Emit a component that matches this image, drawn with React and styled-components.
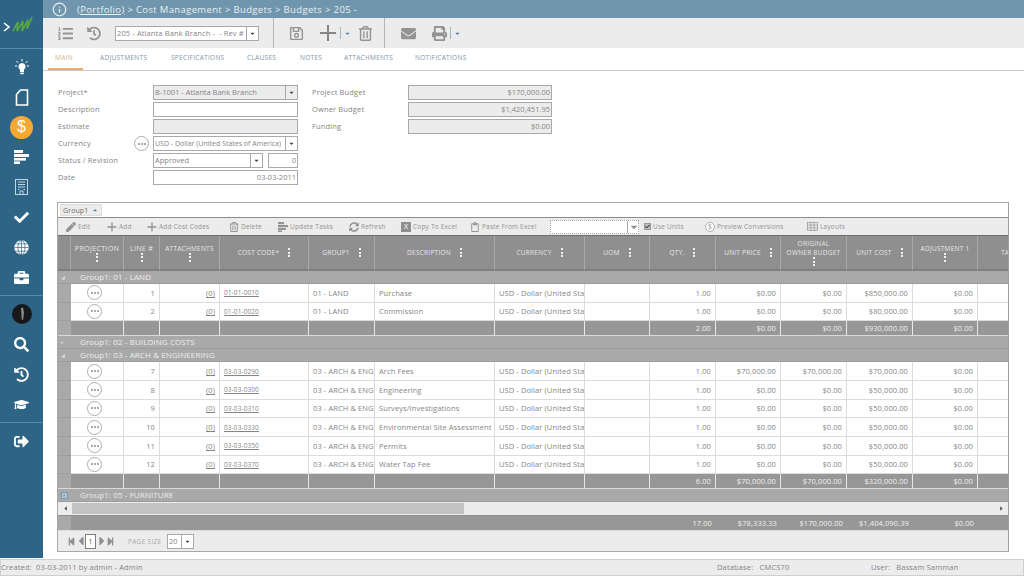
import React from "react";
import styled, { createGlobalStyle } from "styled-components";
import {
  FaListOl,
  FaHistory,
  FaRegSave,
  FaRegTrashAlt,
  FaEnvelope,
  FaPrint,
  FaCheck,
  FaBriefcase,
  FaSearch,
  FaGraduationCap,
  FaSignOutAlt,
  FaPen,
  FaSyncAlt,
  FaRegClipboard,
  FaStepBackward,
  FaStepForward,
  FaCaretLeft,
  FaCaretRight,
  FaCaretDown,
  FaCaretUp,
} from "react-icons/fa";
import { FiInfo } from "react-icons/fi";

const FONT = '"Open Sans", "Liberation Sans", sans-serif';

const GlobalStyle = createGlobalStyle`
  html, body {
    margin: 0;
    padding: 0;
    background: #fff;
    overflow: hidden;
  }
  * {
    box-sizing: border-box;
  }
`;

const Page = styled.div`
  width: 1024px;
  height: 576px;
  display: flex;
  flex-direction: column;
  font-family: ${FONT};
  color: #858585;
  font-size: 7.5px;
  letter-spacing: 0.1px;
`;

const Body = styled.div`
  display: flex;
  height: 558px;
`;

const Sidebar = styled.nav`
  width: 43px;
  flex: none;
  background: #2e6485;
  display: flex;
  flex-direction: column;
`;

const LogoBox = styled.div`
  height: 49px;
  padding: 15px 0 0 3px;
  border-bottom: 1px solid #5c89a4;
`;

const NavGroup = styled.div`
  display: flex;
  flex-direction: column;
  padding: 3px 0 3px;
  border-bottom: ${(p) => (p.$last ? "none" : "1px solid #5c89a4")};
`;

const NavItem = styled.div`
  height: 30px;
  display: flex;
  align-items: center;
  justify-content: center;
  color: #fff;
  font-size: 15px;
`;

const Coin = styled.div`
  width: 23px;
  height: 23px;
  border-radius: 50%;
  background: #f5a834;
  color: #fff;
  display: flex;
  align-items: center;
  justify-content: center;
  font-size: 16px;
  font-family: "Liberation Sans", sans-serif;
`;

const Main = styled.main`
  flex: 1;
  min-width: 0;
  display: flex;
  flex-direction: column;
`;

const TitleBar = styled.header`
  height: 18px;
  background: #7096ad;
  color: #e9eff3;
  display: flex;
  align-items: center;
  gap: 10px;
  padding-left: 9px;
  font-size: 9.5px;
  letter-spacing: 0.35px;
  svg {
    font-size: 15px;
  }
  u {
    text-underline-offset: 1px;
  }
`;

const TopToolbar = styled.div`
  height: 30px;
  background: #ececec;
  display: flex;
  align-items: center;
  color: #939393;
  font-size: 15px;
`;

const IconSlot = styled.div`
  width: ${(p) => p.$w}px;
  flex: none;
  display: flex;
  align-items: center;
  justify-content: center;
  gap: ${(p) => p.$gap || 0}px;
`;

const ToolDivider = styled.div`
  width: 1px;
  height: 30px;
  background: #b4b4b4;
  flex: none;
`;

const MiniCaret = styled(FaCaretDown)`
  font-size: 7px;
  color: #4f7b96;
`;

const ThinBar = styled.span`
  width: 1px;
  height: 12px;
  background: #9fb6c5;
`;

const Tabs = styled.div`
  height: 23px;
  display: flex;
  gap: 23px;
  padding: 6px 0 0 12px;
  border-bottom: 1px solid #c9c9c9;
`;

const Tab = styled.div`
  position: relative;
  height: 16px;
  line-height: 8px;
  width: ${(p) => p.$w}px;
  white-space: nowrap;
  font-size: 6.5px;
  letter-spacing: 0.3px;
  color: ${(p) => (p.$active ? "#d8b28e" : "#7f97a8")};
  ${(p) =>
    p.$active &&
    `&::after {
      content: "";
      position: absolute;
      left: -7px;
      right: -6px;
      bottom: 0;
      height: 2px;
      background: #e8b06c;
    }`}
`;

const Form = styled.section`
  display: flex;
  gap: 14px;
  padding: 14px 0 0 15px;
  height: 131px;
`;

const FormColumn = styled.div`
  width: 240px;
  display: flex;
  flex-direction: column;
  gap: 2px;
`;

const FormRow = styled.div`
  height: 15px;
  display: grid;
  grid-template-columns: ${(p) => p.$label}px 1fr;
  align-items: center;
  font-size: 7.5px;
  letter-spacing: 0.15px;
`;

const Label = styled.span`
  margin-top: -1px;
`;

const LabelCell = styled.div`
  display: flex;
  align-items: center;
  justify-content: space-between;
  padding-right: 4px;
`;

const Field = styled.div`
  height: 15px;
  flex: ${(p) => (p.$w ? "none" : 1)};
  width: ${(p) => (p.$w ? `${p.$w}px` : "auto")};
  border: 1px solid #a9a9a9;
  background: ${(p) => (p.$disabled ? "#ececec" : "#fff")};
  display: flex;
  align-items: center;
  justify-content: ${(p) => (p.$right ? "flex-end" : "flex-start")};
  padding: 0 1px 1px;
  min-width: 0;
  overflow: hidden;
  white-space: pre;
  font-size: ${(p) => p.$size || 7.5}px;
  letter-spacing: ${(p) => p.$spacing || 0}px;
  color: #858585;
`;

const FieldText = styled.span`
  flex: 1;
  min-width: 0;
  overflow: hidden;
`;

const DropButton = styled.span`
  flex: none;
  align-self: stretch;
  width: 12px;
  margin: 0 -1px -1px 0;
  border-left: 1px solid #a9a9a9;
  display: flex;
  align-items: center;
  justify-content: center;
  font-size: 7px;
  color: #444;
`;

const FieldPair = styled.div`
  display: flex;
  gap: 5px;
`;

const Circle = styled.span`
  width: ${(p) => p.$size || 15}px;
  height: ${(p) => p.$size || 15}px;
  border: 1px solid #aeaeae;
  border-radius: 50%;
  background: #fff;
  display: inline-flex;
  align-items: center;
  justify-content: center;
  gap: 1px;
  flex: none;
`;

const Dot = styled.i`
  width: 2px;
  height: 2px;
  border-radius: 50%;
  background: #8f8f8f;
`;

const GridPanel = styled.section`
  width: 952px;
  margin-left: 14px;
  height: 350px;
  border: 1px solid #a9a9a9;
  border-right-color: #a0a0a0;
  display: flex;
  flex-direction: column;
  overflow: hidden;
`;

const GroupPanel = styled.div`
  height: 15px;
  flex: none;
  padding: 1px 0 0 2px;
  border-bottom: 1px solid #8c8c8c;
`;

const GroupChip = styled.span`
  width: 42px;
  height: 12px;
  background: #ececec;
  border: 1px solid #dcdcdc;
  display: inline-flex;
  align-items: center;
  justify-content: space-between;
  padding: 0 3px 0 2px;
  font-size: 7px;
  color: #6f6f6f;
  svg {
    font-size: 6px;
    color: #4f7b96;
  }
`;

const GridToolbar = styled.div`
  height: 18px;
  flex: none;
  background: #ececec;
  display: flex;
  align-items: center;
  padding-left: 8px;
  border-bottom: 1px solid #6e6e6e;
  font-size: 6.5px;
  letter-spacing: 0.2px;
  color: #939393;
`;

const ToolItem = styled.div`
  width: ${(p) => p.$w}px;
  flex: none;
  display: flex;
  align-items: center;
  gap: 2px;
  white-space: nowrap;
  svg {
    flex: none;
    font-size: 10px;
    color: #939393;
  }
`;

const ToolSelect = styled(Field)`
  height: 14px;
  width: 89px;
  flex: none;
  border-style: dotted;
  justify-content: flex-end;
  padding: 0;
`;

const Checkbox = styled.span`
  width: 7px;
  height: 7px;
  background: #bdbdbd;
  border: 1px solid #999;
  display: flex;
  align-items: center;
  justify-content: center;
  svg {
    font-size: 5px;
    color: #444;
  }
`;

const XBox = styled.span`
  width: 10px;
  height: 10px;
  background: #8f8f8f;
  color: #fff;
  font-size: 7px;
  display: flex;
  align-items: center;
  justify-content: center;
`;

const TableClip = styled.div`
  width: 100%;
  overflow: hidden;
  flex: none;
`;

const Table = styled.table`
  table-layout: fixed;
  border-collapse: separate;
  border-spacing: 0;
  width: 990px;
`;

const HeadCell = styled.th`
  height: 35px;
  padding: 0 ${(p) => (p.$wrap ? 5 : 1)}px;
  background: #8f8f8f;
  border-right: 1px solid #a9a9a9;
  border-bottom: 2px solid #7e7e7e;
  color: #e6e6e6;
  font-size: ${(p) => (p.$big ? 7.2 : 6.5)}px;
  font-weight: 400;
  letter-spacing: 0.25px;
  line-height: 9px;
  text-align: center;
  vertical-align: middle;
  white-space: ${(p) => (p.$wrap ? "normal" : "nowrap")};
`;

const HeadInner = styled.div`
  display: flex;
  flex-direction: ${(p) => (p.$stack ? "column" : "row")};
  align-items: center;
  justify-content: center;
  gap: ${(p) => (p.$stack ? 0 : 9)}px;
`;

const Kebab = styled.span`
  display: flex;
  flex-direction: column;
  gap: 1.5px;
  i {
    width: 2px;
    height: 2px;
    background: #f2f2f2;
  }
`;

const GroupCell = styled.td`
  height: 13px;
  background: #a9a9a9;
  border-bottom: 1px solid #9c9c9c;
  color: #ededed;
  font-size: 8px;
  line-height: 10px;
  letter-spacing: 0.1px;
  padding: 0;
  white-space: nowrap;
`;

const GroupInner = styled.div`
  display: flex;
  align-items: center;
  height: 12px;
`;

const Toggle = styled.span`
  width: 22px;
  height: 8px;
  padding-left: 3px;
  font-size: 5px;
  line-height: 8px;
  color: #dedede;
  display: flex;
  align-items: center;
`;

const BlueToggle = styled.span`
  width: 7px;
  height: 7px;
  border: 1px solid #6f9cbd;
  background: #b9c6cf;
  color: #6f9cbd;
  display: flex;
  align-items: center;
  justify-content: center;
  font-size: 5px;
`;

const Indicator = styled.td`
  height: 18.67px;
  background: #a9a9a9;
  border-bottom: 1px solid #9e9e9e;
  padding: 0;
`;

const Cell = styled.td`
  height: 18.67px;
  padding: 0 ${(p) => (p.$right ? 4 : p.$center ? 5 : 0)}px 0 ${(p) => (p.$pad ? 4 : 0)}px;
  border-right: 1px solid #dcdcdc;
  border-bottom: 1px solid #dcdcdc;
  text-align: ${(p) => (p.$right ? "right" : p.$center ? "center" : "left")};
  overflow: hidden;
  white-space: nowrap;
  color: #858585;
  font-size: 7.5px;
  line-height: 10px;
  letter-spacing: 0.1px;
  vertical-align: middle;
`;

const CodeLink = styled.u`
  font-size: 6.5px;
  text-underline-offset: 1px;
`;

const AttachLink = styled.u`
  text-underline-offset: 1px;
`;

const SumIndicator = styled.td`
  height: 15px;
  background: #a9a9a9;
  border-bottom: 1px solid #d8d8d8;
  padding: 0;
`;

const SumCell = styled.td`
  height: 15px;
  padding: 0 4px 0 0;
  background: #979797;
  border-right: 1px solid #e8e8e8;
  border-bottom: 1px solid #d8d8d8;
  text-align: right;
  color: #f0f0f0;
  font-size: 7.5px;
  line-height: 10px;
  letter-spacing: 0.1px;
  white-space: nowrap;
`;

const ScrollRow = styled.div`
  height: 14px;
  flex: none;
  display: flex;
  align-items: stretch;
  background: #ececec;
  border-bottom: 1px solid #8f8f8f;
`;

const ScrollEnd = styled.span`
  width: ${(p) => p.$w}px;
  flex: none;
  display: flex;
  align-items: center;
  justify-content: center;
  font-size: 7px;
  color: #555;
`;

const ScrollThumb = styled.span`
  width: 392px;
  margin: 1px 0;
  flex: none;
  background: #c2c2c2;
`;

const ScrollTrack = styled.span`
  flex: 1;
`;

const FootCell = styled(SumCell)`
  height: 14px;
  border-right: none;
  border-bottom: none;
`;

const FootIndicator = styled(SumIndicator)`
  height: 14px;
  border-bottom: none;
`;

const Pager = styled.div`
  flex: 1;
  background: #ececec;
  border-top: 1px solid #dcdcdc;
  display: flex;
  align-items: center;
  padding-left: 9px;
  color: #8f8f8f;
  font-size: 9px;
`;

const PagerArrows = styled.div`
  width: 61px;
  display: flex;
  align-items: center;
`;

const PageBox = styled.span`
  width: 11px;
  height: 15px;
  margin-right: 1px;
  border: 1px solid #7d7d7d;
  background: #fff;
  color: #555;
  font-size: 7px;
  display: flex;
  align-items: center;
  justify-content: center;
`;

const PagerPrev = styled(FaCaretLeft)`
  font-size: 14px;
  margin: 0 -2.5px;
`;

const PagerNext = styled(FaCaretRight)`
  font-size: 14px;
  margin: 0 -2.5px;
`;

const PageSizeLabel = styled.span`
  width: 39px;
  font-size: 6.5px;
  letter-spacing: 0.3px;
  color: #aaa;
  white-space: nowrap;
`;

const StatusBar = styled.footer`
  height: 17px;
  margin-top: 1px;
  background: #ececec;
  border: 1px solid #cfcfcf;
  display: flex;
  align-items: center;
  padding-bottom: 1px;
  font-size: 7.5px;
  letter-spacing: 0.15px;
  color: #858585;
  white-space: pre;
`;

const StatusPart = styled.span`
  width: ${(p) => p.$w}px;
  flex: none;
`;

const Logo = () => (
  <svg width="32" height="20" viewBox="0 0 32 20">
    <polyline points="1,8 6,12 1,16" fill="none" stroke="#fff" strokeWidth="1.6" />
    <polyline
      points="10,16 15,7 14,16 20,6 19,16 25,5 24,14 29,2"
      fill="none"
      stroke="#57a645"
      strokeWidth="1.7"
    />
  </svg>
);

const BulbIcon = () => (
  <svg width="16" height="16" viewBox="0 0 16 16" fill="#fff">
    <path d="M8 4a3.6 3.6 0 0 0-2 6.6V13h4v-2.4A3.6 3.6 0 0 0 8 4z" />
    <rect x="6.2" y="13.6" width="3.6" height="1.6" />
    <path d="M8 0v2.5M2.5 2l1.6 1.8M13.5 2l-1.6 1.8M1 7h2.2M13 7h2" stroke="#fff" strokeWidth="1" />
  </svg>
);

const DocIcon = () => (
  <svg width="14" height="17" viewBox="0 0 14 17" fill="none" stroke="#fff" strokeWidth="1.6">
    <path d="M5.5 1H12.5V16H1.5V5.5z" />
  </svg>
);

const GanttIcon = () => (
  <svg width="15" height="14" viewBox="0 0 15 14" fill="#fff">
    <rect x="0" y="0" width="9" height="3" />
    <rect x="0" y="4" width="15" height="3" />
    <rect x="0" y="8" width="12" height="2.6" />
    <rect x="0" y="11.4" width="6" height="2.6" />
  </svg>
);

const BuildingIcon = () => (
  <svg width="13" height="16" viewBox="0 0 13 16" fill="none" stroke="#c5d3dc" strokeWidth="1">
    <rect x="0.5" y="0.5" width="12" height="15" />
    <path d="M3 3h7M3 5.5h7M3 8h7M3 10.5h1.5M8.500 10.500H10M5 15v-3h3v3" />
  </svg>
);

const GlobeIcon = () => (
  <svg width="15" height="15" viewBox="0 0 15 15">
    <circle cx="7.500" cy="7.500" r="7.200" fill="#fff" />
    <g fill="none" stroke="#2e6485" strokeWidth="0.7">
      <ellipse cx="7.500" cy="7.500" rx="3.500" ry="7.200" />
      <path d="M7.500 0v15M0.300 7.500h14.400M1.300 3.800h12.400M1.300 11.200h12.400" />
    </g>
  </svg>
);

const Avatar = () => (
  <svg width="20" height="20" viewBox="0 0 20 20">
    <circle cx="10" cy="10" r="10" fill="#17181a" />
    <path d="M9 4l2-.5 1 5-.8 7-1.400.5-.4-5.500z" fill="#8a8a8a" />
  </svg>
);

const BigPlus = ({ size = 18, color = "#858585", weight = 2 }) => (
  <svg width={size} height={size} viewBox="0 0 18 18" fill="none" stroke={color} strokeWidth={weight}>
    <path d="M9 1v16M1 9h16" />
  </svg>
);

const BarsIcon = () => (
  <svg width="10" height="10" viewBox="0 0 10 10" fill="#939393">
    <rect x="0" y="0" width="6" height="2.200" />
    <rect x="0" y="3" width="10" height="2.200" />
    <rect x="0" y="6" width="8" height="2" />
    <rect x="0" y="8.500" width="4" height="1.500" />
  </svg>
);

const GridIcon = () => (
  <svg width="11" height="9" viewBox="0 0 11 9" fill="none" stroke="#939393" strokeWidth="0.7">
    <rect x="0.400" y="0.400" width="10.200" height="8.200" />
    <path d="M0.400 3.100h10.200M0.400 5.900h10.200M3.800 0.400v8.200M7.200 0.400v8.200" />
  </svg>
);

const Dots = () => (
  <Circle>
    <Dot />
    <Dot />
    <Dot />
  </Circle>
);

const Select = ({ children, ...rest }) => (
  <Field {...rest}>
    <FieldText>{children}</FieldText>
    <DropButton>
      <FaCaretDown />
    </DropButton>
  </Field>
);

const COLUMNS = [13, 53, 36, 60, 89, 66, 120, 90, 65, 66, 65, 66, 66, 65, 70];

const Columns = () => (
  <colgroup>
    {COLUMNS.map((w, i) => (
      <col key={i} style={{ width: w }} />
    ))}
  </colgroup>
);

const HEADERS = [
  { label: "PROJECTION", stack: true, big: true },
  { label: "LINE #", stack: true, big: true },
  { label: "ATTACHMENTS", stack: true },
  { label: "COST CODE*" },
  { label: "GROUP1" },
  { label: "DESCRIPTION" },
  { label: "CURRENCY" },
  { label: "UOM" },
  { label: "QTY." },
  { label: "UNIT PRICE" },
  { label: "ORIGINAL OWNER BUDGET", stack: true, wrap: true },
  { label: "UNIT COST" },
  { label: "ADJUSTMENT 1", stack: true },
  { label: "TAX" },
];

const LAND = "01 - LAND";
const ARCH = "03 - ARCH & ENGINEERING";

const landRows = [
  { line: 1, code: "01-01-0010", group: LAND, desc: "Purchase", price: "$0.00", owner: "$0.00", cost: "$850,000.00" },
  { line: 2, code: "01-01-0020", group: LAND, desc: "Commission", price: "$0.00", owner: "$0.00", cost: "$80,000.00" },
];

const archRows = [
  { line: 7, code: "03-03-0290", group: ARCH, desc: "Arch Fees", price: "$70,000.00", owner: "$70,000.00", cost: "$70,000.00" },
  { line: 8, code: "03-03-0300", group: ARCH, desc: "Engineering", price: "$0.00", owner: "$0.00", cost: "$50,000.00" },
  { line: 9, code: "03-03-0310", group: ARCH, desc: "Surveys/Investigations", price: "$0.00", owner: "$0.00", cost: "$50,000.00" },
  { line: 10, code: "03-03-0330", group: ARCH, desc: "Environmental Site Assessment", price: "$0.00", owner: "$0.00", cost: "$50,000.00" },
  { line: 11, code: "03-03-0350", group: ARCH, desc: "Permits", price: "$0.00", owner: "$0.00", cost: "$50,000.00" },
  { line: 12, code: "03-03-0370", group: ARCH, desc: "Water Tap Fee", price: "$0.00", owner: "$0.00", cost: "$50,000.00" },
];

const DataRow = ({ row }) => (
  <tr>
    <Indicator />
    <Cell $center>
      <Dots />
    </Cell>
    <Cell $right>{row.line}</Cell>
    <Cell $right>
      <AttachLink>(0)</AttachLink>
    </Cell>
    <Cell $pad>
      <CodeLink>{row.code}</CodeLink>
    </Cell>
    <Cell $pad>{row.group}</Cell>
    <Cell $pad>{row.desc}</Cell>
    <Cell $pad>USD - Dollar (United States of America)</Cell>
    <Cell />
    <Cell $right>1.00</Cell>
    <Cell $right>{row.price}</Cell>
    <Cell $right>{row.owner}</Cell>
    <Cell $right>{row.cost}</Cell>
    <Cell $right>$0.00</Cell>
    <Cell />
  </tr>
);

const SumRow = ({ qty, price, owner, cost }) => (
  <tr>
    <SumIndicator />
    <SumCell />
    <SumCell />
    <SumCell />
    <SumCell />
    <SumCell />
    <SumCell />
    <SumCell />
    <SumCell />
    <SumCell>{qty}</SumCell>
    <SumCell>{price}</SumCell>
    <SumCell>{owner}</SumCell>
    <SumCell>{cost}</SumCell>
    <SumCell>$0.00</SumCell>
    <SumCell />
  </tr>
);

const GroupRow = ({ label, open, active }) => (
  <tr>
    <GroupCell colSpan={15}>
      <GroupInner>
        <Toggle>
          {active ? <BlueToggle><FaCaretRight /></BlueToggle> : open ? "◢" : "▸"}
        </Toggle>
        Group1: {label}
      </GroupInner>
    </GroupCell>
  </tr>
);

const App = () => (
  <Page>
    <GlobalStyle />
    <Body>
      <Sidebar>
        <LogoBox>
          <Logo />
        </LogoBox>
        <NavGroup>
          <NavItem><BulbIcon /></NavItem>
          <NavItem><DocIcon /></NavItem>
          <NavItem><Coin>$</Coin></NavItem>
          <NavItem><GanttIcon /></NavItem>
          <NavItem><BuildingIcon /></NavItem>
          <NavItem><FaCheck /></NavItem>
          <NavItem><GlobeIcon /></NavItem>
          <NavItem><FaBriefcase /></NavItem>
        </NavGroup>
        <NavGroup>
          <NavItem><Avatar /></NavItem>
          <NavItem><FaSearch /></NavItem>
          <NavItem><FaHistory /></NavItem>
          <NavItem><FaGraduationCap /></NavItem>
        </NavGroup>
        <NavGroup $last>
          <NavItem><FaSignOutAlt /></NavItem>
        </NavGroup>
      </Sidebar>
      <Main>
        <TitleBar>
          <FiInfo />
          <span>
            <u>(Portfolio)</u> &gt; Cost Management &gt; Budgets &gt; Budgets &gt; 205 -
          </span>
        </TitleBar>
        <TopToolbar>
          <IconSlot $w={44}><FaListOl /></IconSlot>
          <IconSlot $w={14}><FaHistory /></IconSlot>
          <IconSlot $w={14} />
          <Select $w={144} $spacing={0.12}>205 - Atlanta Bank Branch -  - Rev #</Select>
          <IconSlot $w={14} />
          <ToolDivider />
          <IconSlot $w={44}><FaRegSave /></IconSlot>
          <IconSlot $w={34} $gap={3}>
            <BigPlus />
            <ThinBar />
            <MiniCaret />
          </IconSlot>
          <IconSlot $w={26}><FaRegTrashAlt /></IconSlot>
          <IconSlot $w={6} />
          <ToolDivider />
          <IconSlot $w={46}><FaEnvelope /></IconSlot>
          <IconSlot $w={30} $gap={3}>
            <FaPrint />
            <ThinBar />
            <MiniCaret />
          </IconSlot>
        </TopToolbar>
        <Tabs>
          <Tab $active $w={22}>MAIN</Tab>
          <Tab $w={48}>ADJUSTMENTS</Tab>
          <Tab $w={53}>SPECIFICATIONS</Tab>
          <Tab $w={30}>CLAUSES</Tab>
          <Tab $w={21}>NOTES</Tab>
          <Tab $w={48}>ATTACHMENTS</Tab>
          <Tab $w={50}>NOTIFICATIONS</Tab>
        </Tabs>
        <Form>
          <FormColumn>
            <FormRow $label={95}>
              <Label>Project*</Label>
              <Select $disabled>B-1001 - Atlanta Bank Branch</Select>
            </FormRow>
            <FormRow $label={95}>
              <Label>Description</Label>
              <Field />
            </FormRow>
            <FormRow $label={95}>
              <Label>Estimate</Label>
              <Field $disabled />
            </FormRow>
            <FormRow $label={95}>
              <LabelCell>
                <Label>Currency</Label>
                <Dots />
              </LabelCell>
              <Select $size={7}>USD - Dollar (United States of America)</Select>
            </FormRow>
            <FormRow $label={95}>
              <Label>Status / Revision</Label>
              <FieldPair>
                <Select>Approved</Select>
                <Field $w={30} $right>0</Field>
              </FieldPair>
            </FormRow>
            <FormRow $label={95}>
              <Label>Date</Label>
              <Field $right>03-03-2011</Field>
            </FormRow>
          </FormColumn>
          <FormColumn>
            <FormRow $label={96}>
              <Label>Project Budget</Label>
              <Field $disabled $right>$170,000.00</Field>
            </FormRow>
            <FormRow $label={96}>
              <Label>Owner Budget</Label>
              <Field $disabled $right>$1,420,451.95</Field>
            </FormRow>
            <FormRow $label={96}>
              <Label>Funding</Label>
              <Field $disabled $right>$0.00</Field>
            </FormRow>
          </FormColumn>
        </Form>
        <GridPanel>
          <GroupPanel>
            <GroupChip>
              Group1
              <FaCaretUp />
            </GroupChip>
          </GroupPanel>
          <GridToolbar>
            <ToolItem $w={41}><FaPen />Edit</ToolItem>
            <ToolItem $w={40}><BigPlus size={10} color="#939393" weight={2.4} />Add</ToolItem>
            <ToolItem $w={82}><BigPlus size={10} color="#939393" weight={2.4} />Add Cost Codes</ToolItem>
            <ToolItem $w={49}><FaRegTrashAlt />Delete</ToolItem>
            <ToolItem $w={71}><BarsIcon />Update Tasks</ToolItem>
            <ToolItem $w={52}><FaSyncAlt />Refresh</ToolItem>
            <ToolItem $w={69}><XBox>X</XBox>Copy To Excel</ToolItem>
            <ToolItem $w={80}><FaRegClipboard />Paste From Excel</ToolItem>
            <ToolItem $w={94}>
              <ToolSelect>
                <DropButton><FaCaretDown /></DropButton>
              </ToolSelect>
            </ToolItem>
            <ToolItem $w={61}>
              <Checkbox><FaCheck /></Checkbox>
              <span>Use Units</span>
            </ToolItem>
            <ToolItem $w={102}>
              <Circle $size={10}><span>$</span></Circle>
              Preview Conversions
            </ToolItem>
            <ToolItem $w={60}><GridIcon />Layouts</ToolItem>
          </GridToolbar>
          <TableClip>
            <Table>
              <Columns />
              <thead>
                <tr>
                  <HeadCell />
                  {HEADERS.map((h) => (
                    <HeadCell key={h.label} $wrap={h.wrap} $big={h.big}>
                      <HeadInner $stack={h.stack}>
                        <span>{h.label}</span>
                        <Kebab><i /><i /><i /></Kebab>
                      </HeadInner>
                    </HeadCell>
                  ))}
                </tr>
              </thead>
              <tbody>
                <GroupRow label="01 - LAND" open />
                {landRows.map((r) => (
                  <DataRow key={r.line} row={r} />
                ))}
                <SumRow qty="2.00" price="$0.00" owner="$0.00" cost="$930,000.00" />
                <GroupRow label="02 - BUILDING COSTS" />
                <GroupRow label="03 - ARCH & ENGINEERING" open />
                {archRows.map((r) => (
                  <DataRow key={r.line} row={r} />
                ))}
                <SumRow qty="6.00" price="$70,000.00" owner="$70,000.00" cost="$320,000.00" />
                <GroupRow label="05 - FURNITURE" active />
              </tbody>
            </Table>
          </TableClip>
          <ScrollRow>
            <ScrollEnd $w={14}><FaCaretLeft /></ScrollEnd>
            <ScrollThumb />
            <ScrollTrack />
            <ScrollEnd $w={14}><FaCaretRight /></ScrollEnd>
          </ScrollRow>
          <TableClip>
            <Table>
              <Columns />
              <tbody>
                <tr>
                  <FootIndicator />
                  <FootCell colSpan={8} />
                  <FootCell>17.00</FootCell>
                  <FootCell>$78,333.33</FootCell>
                  <FootCell>$170,000.00</FootCell>
                  <FootCell>$1,404,090.39</FootCell>
                  <FootCell>$0.00</FootCell>
                  <FootCell />
                </tr>
              </tbody>
            </Table>
          </TableClip>
          <Pager>
            <PagerArrows>
              <FaStepBackward />
              <PagerPrev />
              <PageBox>1</PageBox>
              <PagerNext />
              <FaStepForward />
            </PagerArrows>
            <PageSizeLabel>PAGE SIZE</PageSizeLabel>
            <Select $w={27}>20</Select>
          </Pager>
        </GridPanel>
      </Main>
    </Body>
    <StatusBar>
      <StatusPart $w={716}>Created:  03-03-2011 by admin - Admin</StatusPart>
      <StatusPart $w={154}>Database:   CMCS70</StatusPart>
      <StatusPart $w={120}>User:   Bassam Samman</StatusPart>
    </StatusBar>
  </Page>
);

export default App;
